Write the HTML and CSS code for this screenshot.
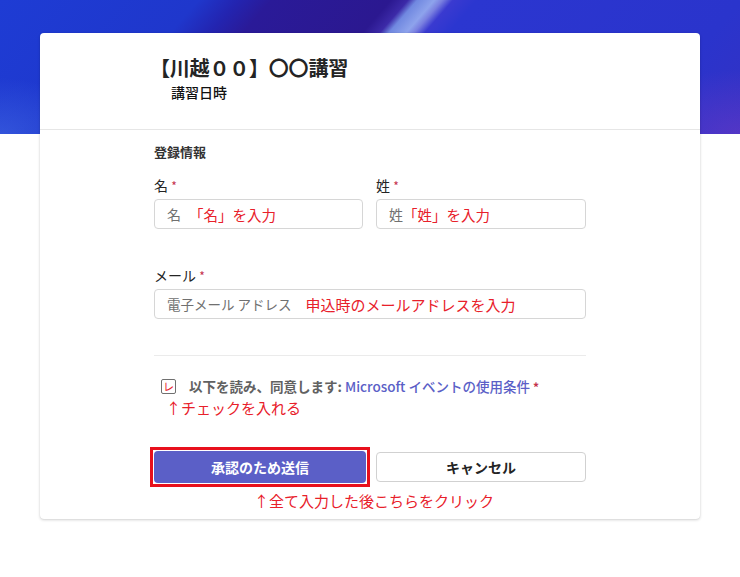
FILE: index.html
```html
<!DOCTYPE html>
<html lang="ja">
<head>
<meta charset="utf-8">
<link rel="stylesheet" href="styles.css">
</head>
<body>
<div class="page">
  <div class="card">
    <div class="card-head">
      <h1 class="title">【川越００】〇〇講習</h1>
      <div class="subtitle">講習日時</div>
    </div>
    <div class="card-body">
      <div class="section-title">登録情報</div>
      <div class="row two">
        <div class="field">
          <div class="label">名 <span class="req">*</span></div>
          <div class="input"><span class="ph">名</span><span class="note">「名」を入力</span></div>
        </div>
        <div class="field">
          <div class="label">姓 <span class="req">*</span></div>
          <div class="input"><span class="ph">姓</span><span class="note tight">「姓」を入力</span></div>
        </div>
      </div>
      <div class="field email">
        <div class="label">メール <span class="req">*</span></div>
        <div class="input"><span class="ph">電子メール アドレス</span><span class="note wide">申込時のメールアドレスを入力</span></div>
      </div>
      <hr class="divider">
      <div class="agree">
        <span class="check"><span class="mark">レ</span></span>
        <span class="agree-text">以下を読み、同意します: <span class="link">Microsoft イベントの使用条件</span> <span class="req">*</span></span>
      </div>
      <div class="note-line check-note">↑チェックを入れる</div>
      <div class="buttons">
        <div class="highlight"><button class="btn primary">承認のため送信</button></div>
        <button class="btn cancel">キャンセル</button>
      </div>
      <div class="note-line submit-note">↑全て入力した後こちらをクリック</div>
    </div>
  </div>
</div>
</body>
</html>
```
FILE: styles.css
```css
* { box-sizing: border-box; }
html, body { margin: 0; padding: 0; }
body {
  width: 740px;
  height: 577px;
  overflow: hidden;
  font-family: "Noto Sans CJK JP", "Noto Sans", sans-serif;
  color: #242424;
  background:
    radial-gradient(ellipse 90px 70px at 580px 95px, rgba(0,0,0,0) 60%, rgba(110,140,255,0.35) 68%, rgba(0,0,0,0) 76%) no-repeat,
    radial-gradient(ellipse 160px 80px at 740px 134px, rgba(120,60,200,0.45), rgba(0,0,0,0) 80%) no-repeat,
    radial-gradient(ellipse 120px 70px at 0px 134px, rgba(70,110,230,0.5), rgba(0,0,0,0) 80%) no-repeat,
    linear-gradient(131deg, #1e3cd4 0px, #1f37cc 150px, #2324b0 180px, #2a1a98 205px, #2b1890 295px, #3c2aa8 308px, #7088e0 315px, #8ea3ec 328px, #7a80e0 334px, #3a3ad0 342px, #2b36d0 360px, #2a34cc 560px, #3431c4 646px) no-repeat,
    #ffffff;
  background-size: 740px 134px, 740px 134px, 740px 134px, 740px 134px, auto;
}
.page { padding-top: 33px; }
.card {
  margin-left: 40px;
  width: 660px;
  height: 486px;
  background: #ffffff;
  border-radius: 4px;
  box-shadow: 0 1px 3px rgba(0,0,0,0.18), 0 0 1px rgba(0,0,0,0.12);
}
.card-head {
  height: 97px;
  padding: 21px 114px 0;
  border-bottom: 1px solid #e6e6e6;
}
.title {
  margin: 0;
  font-size: 20px;
  line-height: 28px;
  font-weight: 700;
  color: #242424;
  margin-left: -4px;
  letter-spacing: -0.2px;
}
.subtitle {
  margin-left: 17px;
  font-size: 14px;
  line-height: 20px;
  color: #111;
  font-weight: 500;
}
.card-body { padding: 12px 114px 0; }
.section-title {
  font-size: 13px;
  line-height: 20px;
  font-weight: 700;
  color: #333;
}
.row.two {
  display: grid;
  grid-template-columns: 209px 210px;
  column-gap: 13px;
  margin-top: 13px;
}
.label {
  font-size: 14px;
  line-height: 20px;
  color: #242424;
  margin-bottom: 3px;
}
.req { color: #c4314b; font-size: 12px; }
.input {
  height: 30px;
  border: 1px solid #d6d6d6;
  border-radius: 4px;
  padding: 0 12px;
  display: flex;
  align-items: center;
  font-size: 14px;
  white-space: nowrap;
}
.ph { color: #707070; }
.email .ph { font-size: 13.5px; }
.note { color: #e8202a; margin-left: 8px; font-size: 14.5px; }
.note.tight { margin-left: 0; }
.note.wide { margin-left: 14px; font-size: 15px; }
.email { margin-top: 36px; }
.divider {
  margin: 36px 0 0;
  border: 0;
  border-top: 1px solid #ebebeb;
  height: 0;
}
.agree {
  display: flex;
  align-items: center;
  margin-top: 20px;
  padding-left: 7px;
  height: 20px;
}
.check {
  width: 15px;
  height: 15px;
  border: 1px solid #707070;
  border-radius: 2px;
  display: flex;
  align-items: center;
  justify-content: center;
  margin-right: 13px;
}
.mark { color: #e8202a; font-size: 11px; line-height: 1; }
.agree-text {
  font-size: 13.5px;
  color: #616161;
  font-weight: 600;
}
.link { color: #5b5fc7; font-weight: 500; }
.note-line {
  color: #e8202a;
  font-size: 15px;
  line-height: 20px;
}
.check-note { margin-top: 2px; padding-left: 12px; }
.buttons {
  display: flex;
  margin-top: 33px;
}
.highlight {
  margin: -4px;
  border: 3px solid #e8101c;
  padding: 1px;
  width: 220px;
}
.btn {
  font-family: inherit;
  font-size: 14px;
  font-weight: 700;
  border-radius: 4px;
  cursor: pointer;
}
.primary {
  display: block;
  width: 212px;
  height: 32px;
  background: #5b5fc7;
  border: 0;
  color: #fff;
}
.cancel {
  width: 210px;
  height: 30px;
  margin-top: 1px;
  margin-left: 10px;
  background: #fff;
  border: 1px solid #d1d1d1;
  color: #242424;
}
.submit-note { margin-top: 8px; padding-left: 100px; }
```
